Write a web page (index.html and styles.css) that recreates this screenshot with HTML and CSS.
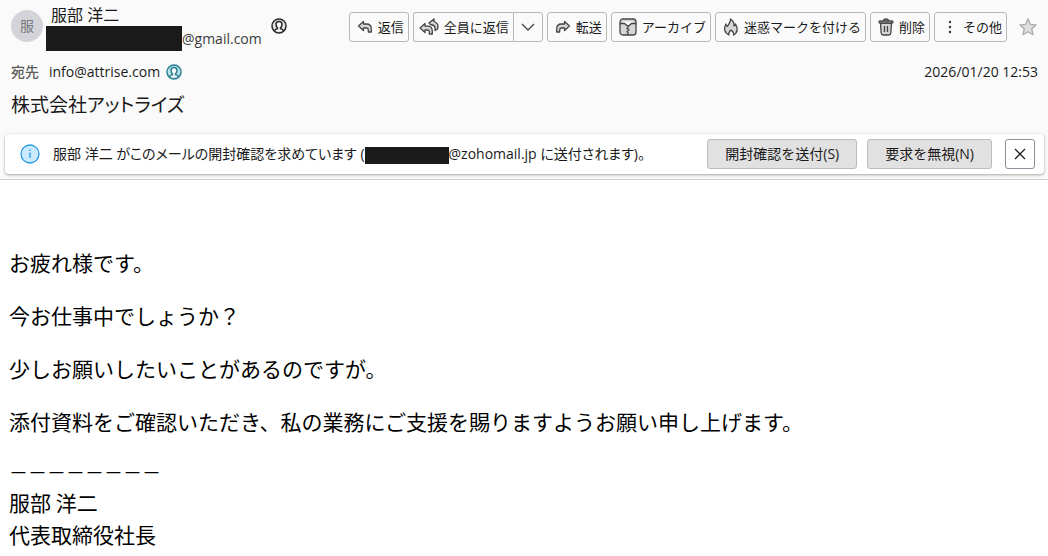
FILE: index.html
```html
<!DOCTYPE html>
<html lang="ja">
<head>
    <meta charset="UTF-8">
    <meta name="viewport" content="width=device-width, initial-scale=1.0">
    <title>株式会社アットライズ</title>
    <link rel="stylesheet" href="styles.css">
</head>
<body>
    <header class="message-header">
        <div class="header-top">
            <div class="sender">
                <div class="avatar">服</div>
                <div class="sender-info">
                    <div class="sender-name">服部 洋二</div>
                    <div class="sender-address"><span class="redacted"></span>@gmail.com</div>
                </div>
                <svg class="contact-icon" viewBox="0 0 16 16" width="16" height="16">
                    <circle cx="8" cy="8" r="7" />
                    <path d="M3.500 13c.3-1.500 1.300-2 3-2.300V9.800C5.500 9 5 8 5 6.500 5 4.500 6.200 3.500 8 3.500s3 1 3 3C11 8 10.500 9 9.500 9.800v.9c1.700.3 2.700.8 3 2.300" />
                </svg>
            </div>
            <div class="toolbar">
                <button class="tool-button">
                    <svg viewBox="0 0 16 16" width="16" height="16"><path d="M6.500 2.500 1.500 7l5 4.500V9h3c1.200 0 1.800.6 1.800 1.800V13h3v-3c0-3-1.600-5-4.800-5h-3z" /></svg>
                    返信
                </button>
                <div class="split-button">
                    <button class="tool-button">
                        <svg viewBox="0 0 20 18" width="20" height="18"><path d="M15 1 10 5l1.500 1.500 2 .5c2.200.5 3 2.500 2.500 5.500l2.500-1.500c1.200-3.500 0-6.500-3.500-7.500z" /><path d="M6 5.500 1 10l5 4.500V12h2.500c1.200 0 1.800.6 1.800 1.800V16h3v-2.800c0-3-1.600-5-4.800-5H6z" /></svg>
                        全員に返信
                    </button>
                    <button class="tool-button drop-button" aria-label="返信メニュー">
                        <svg viewBox="0 0 14 14" width="14" height="14"><path class="line" d="m1 4 6 6 6-6" /></svg>
                    </button>
                </div>
                <button class="tool-button">
                    <svg viewBox="0 0 16 16" width="16" height="16"><path d="m9.500 2.500 5 4.500-5 4.500V9h-3c-1.200 0-1.800.6-1.800 1.800V13h-3v-3c0-3 1.600-5 4.800-5h3z" /></svg>
                    転送
                </button>
                <button class="tool-button">
                    <svg viewBox="0 0 18 18" width="18" height="18"><rect x="1" y="1" width="16" height="16" rx="3" /><path class="paper" d="M4 3.500h10V5h-2L9 8 6 5H4z" /><path class="line" d="M1 5.500h4.500L9 8.500l3.500-3H17M9 8.500v1l-1 1 2 1.500-2 1.500 1 1.500V17" /></svg>
                    アーカイブ
                </button>
                <button class="tool-button">
                    <svg viewBox="0 0 16 18" width="16" height="18"><path d="M7.500 1c3 2 4 4.500 3.500 7 1-.3 1.500-1 1.500-2 2.500 4 2.500 8.500-2 11 .5-2-.5-3.500-2.500-5-1.500 1.500-3 3-2 5C1 14.500.500 10 3 6c0 1.200.5 2 1.500 2.500C4.800 6.500 8 5 7.500 1z" /></svg>
                    迷惑マークを付ける
                </button>
                <button class="tool-button">
                    <svg viewBox="0 0 16 18" width="16" height="18"><path d="M2.500 5h11l-.7 10c-.1 1.300-.8 2-2 2H5.200c-1.200 0-1.900-.7-2-2z" /><path d="M2 3h12a1 1 0 0 1 0 2H2a1 1 0 0 1 0-2zM5.500 3c0-1.300.7-2 2.500-2s2.500.7 2.500 2" /><path class="line" d="M6.500 8v6M9.500 8v6" /></svg>
                    削除
                </button>
                <button class="tool-button">
                    <svg viewBox="0 0 16 16" width="16" height="16"><g class="dots"><circle cx="8" cy="3" r="1.200" /><circle cx="8" cy="8" r="1.200" /><circle cx="8" cy="13" r="1.200" /></g></svg>
                    その他
                </button>
                <button class="star-button" aria-label="スター">
                    <svg viewBox="0 0 18 18" width="18" height="18"><path d="m9 1 2.400 5.300 5.600.6-4.200 3.900 1.200 5.900L9 13.800l-5 2.900 1.200-5.900L1 6.900l5.600-.6z" /></svg>
                </button>
            </div>
        </div>
        <div class="recipient-row">
            <span class="label">宛先</span>
            <span class="recipient">info@attrise.com</span>
            <svg class="contact-icon known" viewBox="0 0 16 16" width="16" height="16">
                <circle cx="8" cy="8" r="7" />
                <path d="M3.500 13c.3-1.500 1.300-2 3-2.300V9.800C5.500 9 5 8 5 6.500 5 4.500 6.200 3.500 8 3.500s3 1 3 3C11 8 10.500 9 9.500 9.800v.9c1.700.3 2.700.8 3 2.300" />
            </svg>
            <time class="date" datetime="2026-01-20T12:53">2026/01/20 12:53</time>
        </div>
        <h1 class="subject">株式会社アットライズ</h1>
        <div class="notice">
            <svg class="info-icon" viewBox="0 0 20 20" width="20" height="20">
                <circle cx="10" cy="10" r="9" />
                <path d="M10 8.500v5.500M10 5.500v1.500" />
            </svg>
            <p class="notice-text">服部 洋二 がこのメールの開封確認を求めています (<span class="redacted small"></span>@zohomail.jp に送付されます)。</p>
            <button class="notice-button">開封確認を送付(S)</button>
            <button class="notice-button">要求を無視(N)</button>
            <button class="close-button" aria-label="閉じる">
                <svg viewBox="0 0 12 12" width="12" height="12"><path d="m1 1 10 10M11 1 1 11" /></svg>
            </button>
        </div>
    </header>
    <main class="message-body">
        <p>お疲れ様です。</p>
        <p>今お仕事中でしょうか？</p>
        <p>少しお願いしたいことがあるのですが。</p>
        <p>添付資料をご確認いただき、私の業務にご支援を賜りますようお願い申し上げます。</p>
        <div class="signature">
            <div class="rule">－－－－－－－－</div>
            <div>服部 洋二</div>
            <div>代表取締役社長</div>
        </div>
    </main>
</body>
</html>
```
FILE: styles.css
```css
body {
    margin: 0;
    background-color: #fff;
    color: #1a1a1a;
    font-family: "Open Sans", "Noto Sans CJK JP", sans-serif;
    font-size: 14px;
    line-height: 20px;
}
button {
    font-family: inherit;
    font-size: 14px;
    line-height: 20px;
    color: inherit;
    white-space: nowrap;
    cursor: pointer;
}
svg {
    flex: none;
}
.message-header {
    background-color: #fafafa;
    border-bottom: 1px solid #ccc;
    padding-bottom: 5px;
    font-feature-settings: "palt";
}
.header-top {
    display: flex;
    justify-content: space-between;
    align-items: flex-start;
    padding: 4px 11px 0 11px;
}
.sender {
    display: flex;
    align-items: flex-start;
}
.avatar {
    width: 32px;
    height: 32px;
    margin-top: 6px;
    border-radius: 50%;
    background-color: #d3d3d9;
    color: #77777c;
    line-height: 32px;
    text-align: center;
}
.sender-info {
    margin-left: 3px;
}
.sender-name {
    padding-left: 5px;
    font-size: 16px;
    line-height: 22px;
}
.sender-address {
    display: flex;
    line-height: 25px;
    color: #3a3a3a;
}
.redacted {
    display: inline-block;
    width: 136px;
    height: 25px;
    background-color: #1a1a1a;
}
.redacted.small {
    width: 84px;
    height: 17px;
    vertical-align: middle;
}
.contact-icon {
    fill: #e4e4e4;
    stroke: #2a2a2a;
    stroke-width: 1.5;
}
.contact-icon path {
    fill: #fafafa;
}
.sender .contact-icon {
    margin: 14px 0 0 9px;
}
.contact-icon.known {
    fill: #bfe3e8;
    stroke: #2b8294;
}
.toolbar {
    display: flex;
    gap: 4px;
    margin-top: 8px;
}
.tool-button {
    display: flex;
    align-items: center;
    gap: 5px;
    height: 30px;
    padding: 0 4px 0 7px;
    border: 1px solid #b8b8b8;
    border-radius: 3px;
    background-color: #fafafa;
    font-size: 13px;
}
.tool-button svg {
    fill: #d5d5d5;
    stroke: #444;
    stroke-width: 1.3;
    stroke-linejoin: round;
}
.tool-button .line {
    fill: none;
}
.tool-button .paper {
    fill: #fafafa;
    stroke: none;
}
.tool-button .dots {
    fill: #333;
    stroke: none;
}
.split-button {
    display: flex;
}
.split-button .tool-button:first-child {
    padding-left: 5px;
    border-right: none;
    border-radius: 3px 0 0 3px;
}
.split-button .drop-button {
    padding: 0 7px;
    border-radius: 0 3px 3px 0;
}
.star-button {
    display: flex;
    align-items: center;
    height: 30px;
    margin-left: 8px;
    padding: 0;
    border: none;
    background: none;
}
.star-button svg {
    fill: #dedede;
    stroke: #aaa;
    stroke-width: 1.3;
    stroke-linejoin: round;
}
.recipient-row {
    display: flex;
    align-items: center;
    padding: 11px 10px 0 11px;
}
.label {
    margin-right: 10px;
    color: #5c5c5c;
    font-weight: 500;
}
.recipient {
    margin-right: 6px;
}
.date {
    margin-left: auto;
}
.subject {
    margin: 9px 11px 15px;
    font-size: 19px;
    font-weight: 400;
    line-height: 28px;
}
.notice {
    display: flex;
    align-items: center;
    margin: 0 4px 0 5px;
    padding: 5px 9px 5px 15px;
    border-radius: 4px;
    background-color: #fff;
    box-shadow: 0 1px 3px rgba(0,0,0,0.35);
}
.info-icon {
    fill: #cbeaff;
    stroke: #2398e6;
    stroke-width: 1.3;
}
.notice-text {
    flex: 1;
    margin: 0 0 0 13px;
    white-space: nowrap;
}
.notice-button {
    height: 30px;
    margin-left: 10px;
    padding: 0 17px;
    border: 1px solid #bcbcbc;
    border-radius: 3px;
    background-color: #e1e1e1;
}
.close-button {
    display: flex;
    align-items: center;
    justify-content: center;
    width: 30px;
    height: 30px;
    margin-left: 13px;
    padding: 0;
    border: 1px solid #8f8f9d;
    border-radius: 3px;
    background-color: #fff;
}
.close-button svg {
    stroke: #222;
    stroke-width: 1.3;
}
.message-body {
    padding: 66px 9px 4px;
    color: #000;
    font-family: "Noto Sans CJK JP", sans-serif;
    font-size: 21px;
    line-height: 32px;
}
.message-body p {
    margin: 0 0 21px;
}
.rule {
    font-size: 19px;
    line-height: 28px;
}
```
